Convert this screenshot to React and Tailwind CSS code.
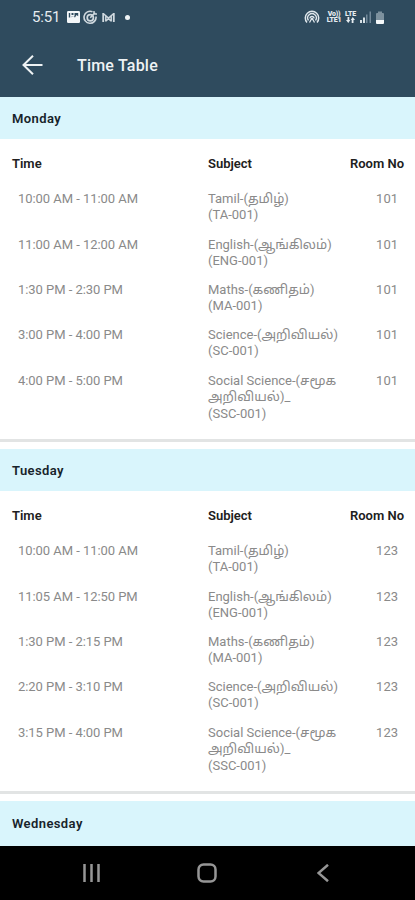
const days = [
  {
    name: "Monday",
    room: "101",
    times: ["10:00 AM - 11:00 AM", "11:00 AM - 12:00 AM", "1:30 PM - 2:30 PM", "3:00 PM - 4:00 PM", "4:00 PM - 5:00 PM"],
  },
  {
    name: "Tuesday",
    room: "123",
    times: ["10:00 AM - 11:00 AM", "11:05 AM - 12:50 PM", "1:30 PM - 2:15 PM", "2:20 PM - 3:10 PM", "3:15 PM - 4:00 PM"],
  },
];

const subjects = [
  ["Tamil-(தமிழ்)", "(TA-001)"],
  ["English-(ஆங்கிலம்)", "(ENG-001)"],
  ["Maths-(கணிதம்)", "(MA-001)"],
  ["Science-(அறிவியல்)", "(SC-001)"],
  ["Social Science-(சமூக", "அறிவியல்)_", "(SSC-001)"],
];

function StatusBar() {
  return (
    <div className="flex h-[34px] items-center pl-8 pr-[31px] text-[#e6ecf0]">
      <span className="w-[35px] text-[15px] leading-[18px] tracking-[-0.200px]">5:51</span>
      <svg width="13" height="12" viewBox="0 0 13 12" className="-mt-px">
        <rect width="13" height="12" rx="1.2" fill="#f3f6f8" />
        <path d="M1.800 2h1.400v4.500H1.800zM4.500 2h2v2h-2zM7.500 2h3.700v3.200L9.500 4 8 6.500 5.500 5 4.500 6.500V5.500h3z" fill="#2f4b5e" />
      </svg>
      <svg width="15" height="15" viewBox="0 0 15 15" fill="none" stroke="#d0d9df" className="ml-[3px]">
        <path d="M9.500 1.800A6 6 0 1 0 13 6.500" strokeWidth="1.600" />
        <circle cx="7.300" cy="7.800" r="3.100" strokeWidth="1.700" />
        <path d="M7.300 7.800 12 2.500M11 1v3h3" strokeWidth="1.500" />
      </svg>
      <svg width="13" height="11" viewBox="0 0 13 11" fill="none" stroke="#d0d9df" className="ml-1">
        <path d="M1.200 10V1M11.800 10V1" strokeWidth="1.800" />
        <path d="M1.200 1.500 6.500 6l5.300-4.500M3.800 9.500V4M9.200 9.500V4M4 9l2.500-2.500L9 9" strokeWidth="1.500" />
      </svg>
      <span className="ml-[10px] size-[5px] rounded-full bg-[#eef3f5]" />
      <svg width="16" height="15" viewBox="0 0 16 15" fill="none" stroke="#dfe7ec" className="-mt-px ml-auto">
        <path d="M3 13.500a6.700 6.700 0 1 1 10 0" strokeWidth="1.500" />
        <path d="M4.500 11.500a4.300 4.300 0 1 1 7 0" strokeWidth="1.400" />
        <path d="M6 9.500a2 2 0 1 1 4 0M8 9l-2.500 4.500M8 9l2.500 4.500" strokeWidth="1.300" />
      </svg>
      <div className="ml-[6px] w-[16px] text-center text-[7px] font-black leading-[6.500px] tracking-[-0.200px]">
        <div>Vo))</div>
        <div>LTE1</div>
      </div>
      <div className="ml-[2px] w-[13px] text-center text-[7px] font-black leading-[6.500px] tracking-[-0.200px]">
        <div>LTE</div>
        <svg width="9" height="6" viewBox="0 0 9 6" className="mx-auto" fill="currentColor">
          <path d="M1.500 0h1.800v3h1L2.300 6 0 3h1.500zM5.700 6h1.800V3H9L6.800 0 4.700 3h1z" />
        </svg>
      </div>
      <svg width="11" height="12" viewBox="0 0 11 12" className="ml-[3px]">
        <path d="M0 9h2v3H0zM3 6.500h2V12H3z" fill="#d7e0e5" />
        <path d="M6 3.500h1.500V12H6zM9.500 0.500H11V12H9.500z" fill="#73899a" />
      </svg>
      <svg width="8" height="13" viewBox="0 0 8 13" className="ml-[5px]">
        <path d="M2 0.500h4v1.500h1q1 0 1 1V9H0V3q0-1 1-1h1z" fill="#7d919e" />
        <path d="M0 9h8v3q0 1-1 1H1q-1 0-1-1z" fill="#f5f8fa" />
      </svg>
    </div>
  );
}

function DayBar({ name }) {
  return (
    <div className="flex h-[42px] shrink-0 items-center bg-[#d9f5fc] pl-3 pt-[2px] text-[13px] font-semibold tracking-[0.400px] text-[#17232a]">
      {name}
    </div>
  );
}

function DayCard({ day }) {
  return (
    <div className="mb-[7px] h-[345px] shrink-0 border-b-[3px] border-[#e2e4e4] bg-white">
      <DayBar name={day.name} />
      <div className="flex pl-3 pr-[11px] pt-[17px] text-[13px] font-semibold leading-4 text-[#202020]">
        <span className="w-[196px]">Time</span>
        <span>Subject</span>
        <span className="ml-auto">Room No</span>
      </div>
      <div className="flex flex-col gap-[13.400px] pt-[19.300px] text-[13px] leading-4 text-[#8a8a8a]">
        {subjects.map((lines, i) => (
          <div key={i} className="flex pl-[18px] pr-[17px]">
            <span className="w-[190px] tracking-[-0.050px]">{day.times[i]}</span>
            <div>
              {lines.map((line) => (
                <div key={line} className={lines.length > 2 ? "h-[16.600px] whitespace-nowrap" : "h-4 whitespace-nowrap"}>
                  {line}
                </div>
              ))}
            </div>
            <span className="ml-auto">{day.room}</span>
          </div>
        ))}
      </div>
    </div>
  );
}

export default function App() {
  return (
    <div className="flex h-[900px] w-[415px] flex-col overflow-hidden bg-white font-[Roboto,'Noto_Sans_Tamil',sans-serif]">
      <header className="h-[97px] shrink-0 bg-[#2f4b5e]">
        <StatusBar />
        <div className="flex h-[62px] items-center pl-[22px] text-[#eef2f4]">
          <svg width="21" height="20" viewBox="0 0 21 20" fill="none" stroke="currentColor" strokeWidth="2">
            <path d="M20.500 10H1.500M11 0.800 1.500 10l9.500 9.200" />
          </svg>
          <h1 className="ml-[34px] pt-px text-[16px] font-medium tracking-[0.200px]">Time Table</h1>
        </div>
      </header>

      <main className="flex h-[749px] shrink-0 flex-col overflow-hidden bg-white">
        {days.map((day) => (
          <DayCard key={day.name} day={day} />
        ))}
        <div className="bg-[#d9f5fc] pb-1 pt-px">
          <DayBar name="Wednesday" />
        </div>
      </main>

      <nav className="flex h-[54px] shrink-0 items-center bg-black pl-[83px] text-[#969696]">
        <svg width="17" height="18" viewBox="0 0 17 18" stroke="currentColor" strokeWidth="2.500">
          <path d="M1.500 0v18M8.500 0v18M15.500 0v18" />
        </svg>
        <svg width="20" height="20" viewBox="0 0 20 20" fill="none" stroke="currentColor" strokeWidth="2.500" className="ml-[97px]">
          <rect x="1.500" y="1.500" width="17" height="17" rx="5" />
        </svg>
        <svg width="12" height="18" viewBox="0 0 12 18" fill="none" stroke="currentColor" strokeWidth="2.500" className="ml-[100px]">
          <path d="M11 0.800 1.500 9l9.500 8.200" />
        </svg>
      </nav>
    </div>
  );
}
